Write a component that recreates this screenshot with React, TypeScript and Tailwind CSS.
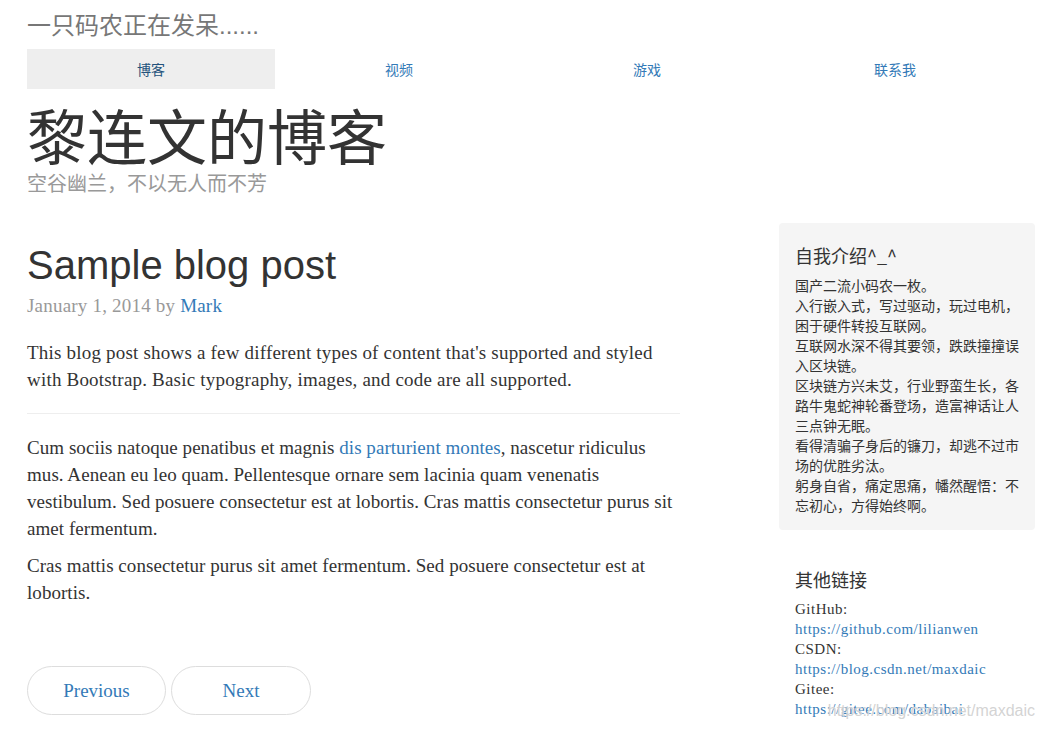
import React from 'react';

const navItems = ['博客', '视频', '游戏', '联系我'];

const intro = [
  '国产二流小码农一枚。',
  '入行嵌入式，写过驱动，玩过电机，困于硬件转投互联网。',
  '互联网水深不得其要领，跌跌撞撞误入区块链。',
  '区块链方兴未艾，行业野蛮生长，各路牛鬼蛇神轮番登场，造富神话让人三点钟无眠。',
  '看得清骗子身后的镰刀，却逃不过市场的优胜劣汰。',
  '躬身自省，痛定思痛，幡然醒悟：不忘初心，方得始终啊。',
];

const links = [
  {name: 'GitHub:', url: 'https://github.com/lilianwen'},
  {name: 'CSDN:', url: 'https://blog.csdn.net/maxdaic'},
  {name: 'Gitee:', url: 'https://gitee.com/dabaibai'},
];

const cjk = "font-['Noto_Sans_CJK_SC',sans-serif]";
const serif = "font-['Liberation_Serif','Noto_Sans_CJK_SC',serif]";

const App: React.FC = () => {
  return (
    <div className="relative w-[1042px] h-[734px] overflow-hidden bg-white pl-[27px]">
      {/* masthead */}
      <div className="font-['Liberation_Sans','Noto_Sans_CJK_SC',sans-serif] text-[24px] leading-[32px] text-[#777] pt-[10px]">一只码农正在发呆......</div>
      <nav className={`${cjk} flex w-[992px] mt-[7px] text-[14px]`}>
        {navItems.map((item, i) => (
          <a
            key={item}
            className={`w-[248px] h-[40px] flex items-center justify-center ${i === 0 ? 'bg-[#eee] text-[#23527c]' : 'text-[#337ab7]'}`}
          >
            {item}
          </a>
        ))}
      </nav>

      <div className="pt-[15px]">
        <h1 className={`${cjk} text-[60px] leading-[60px] text-[#333]`}>黎连文的博客</h1>
        <p className={`${serif} text-[20px] leading-[24px] text-[#999] mt-[8px]`}>空谷幽兰，不以无人而不芳</p>
      </div>

      <div className="flex mt-[27px]">
        {/* main column */}
        <div className={`${serif} w-[653px] text-[19px] leading-[27px] text-[#333]`}>
          <h2 className="font-['Liberation_Sans',sans-serif] text-[40px] leading-[44px] mt-[20px] mb-[5px]">Sample blog post</h2>
          <p className="leading-[27px] tracking-[0.2px] text-[#999] mb-[20px]">
            January 1, 2014 by <a className="text-[#337ab7]">Mark</a>
          </p>
          <p className="tracking-[0.2px]">
            This blog post shows a few different types of content that's supported and styled with Bootstrap. Basic typography, images, and code are all supported.
          </p>
          <hr className="border-t border-[#eee] mt-[20px] mb-[20px]" />
          <p className="mb-[10px] tracking-[0.05px]">
            Cum sociis natoque penatibus et magnis <a className="text-[#337ab7]">dis parturient montes</a>, nascetur ridiculus mus. Aenean eu leo quam. Pellentesque ornare sem lacinia quam venenatis vestibulum. Sed posuere consectetur est at lobortis. Cras mattis consectetur purus sit amet fermentum.
          </p>
          <p className="tracking-[0.05px]">
            Cras mattis consectetur purus sit amet fermentum. Sed posuere consectetur est at lobortis.
          </p>
          <div className="flex gap-[5px] mt-[60px]">
            <a className="w-[139px] h-[49px] flex items-center justify-center rounded-full border border-[#ddd] text-[#337ab7]">Previous</a>
            <a className="w-[140px] h-[49px] flex items-center justify-center rounded-full border border-[#ddd] text-[#337ab7]">Next</a>
          </div>
        </div>

        {/* sidebar */}
        <aside className="ml-[99px] w-[256px]">
          <div className={`${cjk} bg-[#f5f5f5] rounded-[4px] px-[16px] pt-[19px] pb-[15px]`}>
            <h4 className="text-[18px] leading-[26px] text-[#333] mb-[7px]">自我介绍^_^</h4>
            <div className="text-[14px] leading-[20px] text-[#333]">
              {intro.map((line) => (
                <p key={line}>{line}</p>
              ))}
            </div>
          </div>
          <div className="px-[16px] pt-[36px]">
            <h4 className={`${cjk} text-[18px] leading-[26px] text-[#333] mb-[7px]`}>其他链接</h4>
            <div className={`${serif} text-[15px] leading-[20px] tracking-[0.5px] text-[#333]`}>
              {links.map((l) => (
                <div key={l.name}>
                  <div>{l.name}</div>
                  <a className="text-[#337ab7]">{l.url}</a>
                </div>
              ))}
            </div>
          </div>
        </aside>
      </div>

      {/* csdn watermark */}
      <div className="absolute right-[7px] bottom-[11px] font-['Liberation_Sans',sans-serif] text-[16px] text-[#c8c8c8]/80 [text-shadow:0_0_1px_#fff]">
        https://blog.csdn.net/maxdaic
      </div>
    </div>
  );
};

export default App;
